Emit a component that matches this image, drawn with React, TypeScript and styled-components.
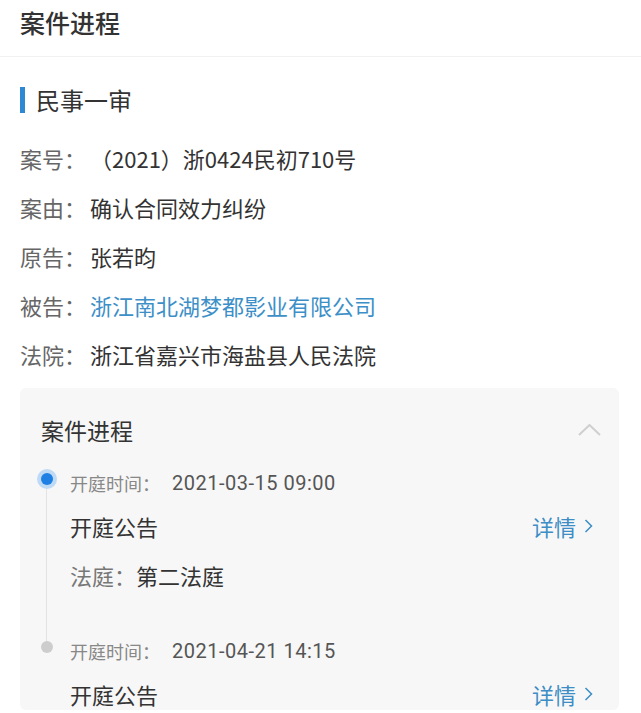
import React from "react";
import styled, { createGlobalStyle } from "styled-components";

const GlobalStyle = createGlobalStyle`
  body {
    margin: 0;
    background: #fff;
    font-family: "Noto Sans CJK SC", "Noto Sans", sans-serif;
    color: #333;
  }
`;

const info = [
  { label: "案号：", value: "（2021）浙0424民初710号" },
  { label: "案由：", value: "确认合同效力纠纷" },
  { label: "原告：", value: "张若昀" },
  { label: "被告：", value: "浙江南北湖梦都影业有限公司", link: true },
  { label: "法院：", value: "浙江省嘉兴市海盐县人民法院" },
];

const hearings = [
  { time: "2021-03-15 09:00", court: "第二法庭", active: true },
  { time: "2021-04-21 14:15" },
];

const ChevronUp = () => (
  <svg width="23" height="12" viewBox="0 0 23 12" fill="none">
    <polyline points="1,11 11.5,1 22,11" stroke="#cfcfcf" strokeWidth="2" />
  </svg>
);

const ChevronRight = () => (
  <svg width="9" height="14" viewBox="0 0 9 14" fill="none">
    <polyline points="1.5,1 7.5,7 1.5,13" stroke="#3d8dc6" strokeWidth="1.5" />
  </svg>
);

const App = () => {
  return (
    <Page>
      <GlobalStyle />
      <Header>案件进程</Header>
      <Section>
        <SectionTitle>民事一审</SectionTitle>
        <InfoList>
          {info.map((row) => (
            <InfoRow key={row.label}>
              <Label>{row.label}</Label>
              <Value $link={row.link}>{row.value}</Value>
            </InfoRow>
          ))}
        </InfoList>
        <Card>
          <CardHead>
            <CardTitle>案件进程</CardTitle>
            <ChevronUp />
          </CardHead>
          <Timeline>
            {hearings.map((h, i) => (
              <Item key={h.time} $last={i === hearings.length - 1}>
                <Dot $active={h.active} />
                <TimeRow>
                  <TimeLabel>开庭时间：</TimeLabel>
                  <TimeValue>{h.time}</TimeValue>
                </TimeRow>
                <TitleRow>
                  <span>开庭公告</span>
                  <Detail>
                    详情
                    <ChevronRight />
                  </Detail>
                </TitleRow>
                {h.court && (
                  <CourtRow>
                    <CourtLabel>法庭：</CourtLabel>
                    <span>{h.court}</span>
                  </CourtRow>
                )}
              </Item>
            ))}
          </Timeline>
        </Card>
      </Section>
    </Page>
  );
};

export default App;

const Page = styled.div`
  width: 641px;
  min-height: 713px;
  overflow: hidden;
`;

const Header = styled.div`
  height: 56px;
  line-height: 44px;
  padding: 0 20px;
  font-size: 25px;
  font-weight: 500;
  color: #333;
  border-bottom: 1px solid #f1f1f1;
`;

const Section = styled.div`
  padding: 30px 22px 0 20px;
`;

const SectionTitle = styled.div`
  display: flex;
  align-items: center;
  gap: 11px;
  height: 26px;
  line-height: 26px;
  font-size: 24px;
  color: #333;

  &::before {
    content: "";
    width: 5px;
    height: 26px;
    background: #2f88d3;
  }
`;

const InfoList = styled.div`
  margin-top: 20px;
  display: flex;
  flex-direction: column;
`;

const InfoRow = styled.div`
  display: flex;
  align-items: center;
  height: 49px;
  font-size: 22px;
`;

const Label = styled.span`
  width: 70px;
  color: #666;
`;

const Value = styled.span<{ $link?: boolean }>`
  color: ${(p) => (p.$link ? "#3d8fc8" : "#333")};
`;

const Card = styled.div`
  margin-top: 10px;
  background: #f7f7f7;
  border-radius: 6px;
  padding: 28px 18px 0 21px;
`;

const CardHead = styled.div`
  display: flex;
  align-items: center;
  justify-content: space-between;
  height: 28px;
`;

const CardTitle = styled.div`
  font-size: 23px;
  color: #333;
`;

const Timeline = styled.div`
  margin-top: 26px;
  display: flex;
  flex-direction: column;
`;

const Item = styled.div<{ $last?: boolean }>`
  position: relative;
  padding-left: 29px;
  padding-bottom: ${(p) => (p.$last ? "0" : "47px")};

  &::after {
    content: "";
    display: ${(p) => (p.$last ? "none" : "block")};
    position: absolute;
    left: 5px;
    top: 9px;
    bottom: -4px;
    width: 1px;
    background: #e3e3e3;
  }
`;

const Dot = styled.span<{ $active?: boolean }>`
  position: absolute;
  left: 0;
  top: 3px;
  width: 12px;
  height: 12px;
  border-radius: 50%;
  z-index: 1;
  background: ${(p) => (p.$active ? "#1e80e3" : "#cdcdcd")};
  box-shadow: ${(p) => (p.$active ? "0 0 0 4px #bfdaf5" : "none")};
`;

const TimeRow = styled.div`
  display: flex;
  align-items: center;
  height: 26px;
  line-height: 26px;
  font-size: 18px;
`;

const TimeLabel = styled.span`
  color: #888;
  margin-right: 12px;
`;

const TimeValue = styled.span`
  color: #555;
  font-family: Roboto, "Noto Sans", sans-serif;
  font-size: 20px;
  letter-spacing: 0.5px;
`;

const TitleRow = styled.div`
  margin-top: 14px;
  display: flex;
  align-items: center;
  justify-content: space-between;
  height: 32px;
  font-size: 22px;
  color: #333;
`;

const Detail = styled.span`
  display: flex;
  align-items: center;
  gap: 8px;
  color: #3d8dc6;
  padding-right: 8px;
`;

const CourtRow = styled.div`
  margin-top: 17px;
  display: flex;
  height: 32px;
  line-height: 32px;
  font-size: 22px;
  color: #333;
`;

const CourtLabel = styled.span`
  color: #777;
`;
